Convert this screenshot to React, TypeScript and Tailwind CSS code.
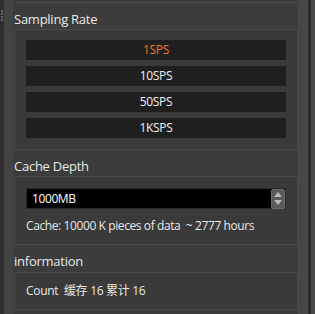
import React from "react";

const rates = ["1SPS", "10SPS", "50SPS", "1KSPS"];

function GroupTitle({ children, h = 26 }: { children: React.ReactNode; h?: number }) {
  return (
    <div
      className={`${h === 26 ? "h-[26px]" : "h-[27px]"} pt-[8px] pl-[1px] text-[13px] leading-[16px] tracking-[-0.25px] text-[#e8e8e8]`}
    >
      {children}
    </div>
  );
}

export default function App() {
  return (
    <div
      className="w-[315px] h-[314px] flex bg-[#3c3c3c] overflow-hidden"
      style={{ fontFamily: '"Open Sans", "Noto Sans CJK SC", sans-serif' }}
    >
      {/* splitter grip */}
      <div className="w-[4px] bg-[#2d2d2d] flex flex-col gap-[1px] pt-[10px] pl-[1px]">
        {[0, 1, 2, 3].map((i) => (
          <div key={i} className="w-[2px] h-[2px] bg-[#6a6a6a]" />
        ))}
      </div>
      <div className="w-[9px] bg-[#434343]" />

      <div className="w-[285px] flex flex-col">
        <div className="h-[3px] border-b border-[#4c4c4c] bg-[#3a3a3a] ml-[1px]" />

        <GroupTitle>Sampling Rate</GroupTitle>
        <div className="ml-[1px] h-[121px] border border-[#4a4a4a] bg-[#3a3a3a] px-[11px] pt-[10px] flex flex-col gap-[6px]">
          {rates.map((r, i) => (
            <div
              key={r}
              className={`h-[20px] bg-[#1f1f1f] flex items-center justify-center text-[12px] tracking-[-0.3px] ${
                i === 0 ? "text-[#f07a1a]" : "text-[#f0f0f0]"
              }`}
            >
              {r}
            </div>
          ))}
        </div>

        <GroupTitle>Cache Depth</GroupTitle>
        <div className="ml-[1px] h-[69px] border border-[#4a4a4a] bg-[#3a3a3a] px-[11px] pt-[11px] flex flex-col">
          <div className="h-[21px] bg-black border border-[#2a2a2a] flex items-center">
            <span className="flex-1 pl-[5px] text-[12px] tracking-[-0.4px] text-white">1000MB</span>
            <div className="w-[14px] h-[20px] bg-[#5a5a5a] border border-[#6a6a6a] rounded-[2px] flex flex-col items-center justify-center gap-[3px]">
              <svg width="8" height="5" viewBox="0 0 8 5">
                <path d="M0 5 L4 0 L8 5 Z" fill="#b8b8b8" />
              </svg>
              <svg width="8" height="5" viewBox="0 0 8 5">
                <path d="M0 0 L4 5 L8 0 Z" fill="#b8b8b8" />
              </svg>
            </div>
          </div>
          <div className="mt-[8px] text-[12px] tracking-[-0.4px] text-[#e8e8e8] whitespace-pre">
            Cache: 10000 K pieces of data  ~ 2777 hours
          </div>
        </div>

        <GroupTitle h={27}>information</GroupTitle>
        <div className="ml-[1px] h-[38px] border border-[#4a4a4a] bg-[#3a3a3a] px-[11px] flex items-center">
          <span className="text-[12px] tracking-[-0.3px] text-[#e8e8e8] whitespace-pre">Count  缓存 16 累计 16</span>
        </div>
      </div>

      <div className="w-[10px] bg-[#474747]" />
      <div className="w-[3px] bg-[#2b2b2b]" />
      <div className="flex-1 bg-[#4a4a4a]" />
    </div>
  );
}
